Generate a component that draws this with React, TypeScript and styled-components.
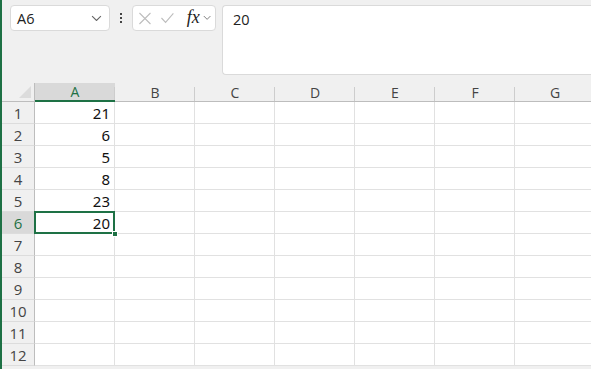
import React from "react";
import styled, { createGlobalStyle } from "styled-components";

const GlobalStyle = createGlobalStyle`
  html, body {
    margin: 0;
    padding: 0;
    background: #f0f0f0;
    overflow: hidden;
  }
  * {
    box-sizing: border-box;
  }
`;

const green = "#1e7145";
const columns = ["A", "B", "C", "D", "E", "F", "G"];
const values: Record<number, string> = { 1: "21", 2: "6", 3: "5", 4: "8", 5: "23", 6: "20" };
const selectedRow = 6;

export default function App() {
  const rows = Array.from({ length: 12 }, (_, i) => i + 1);

  return (
    <Window>
      <GlobalStyle />
      <FormulaRow>
        <NameBox>
          <span>A6</span>
          <Chevron size={11} />
        </NameBox>
        <Dots>
          <i />
          <i />
          <i />
        </Dots>
        <FxBox>
          <svg width="13" height="13" viewBox="0 0 13 13">
            <path d="M0.5 0.5 L12.5 12.5 M12.5 0.5 L0.5 12.5" stroke="#bdbdbd" strokeWidth="1.2" fill="none" />
          </svg>
          <svg width="14" height="12" viewBox="0 0 14 12">
            <path d="M0.5 6 L5 10.8 L13.5 1" stroke="#bdbdbd" strokeWidth="1.2" fill="none" />
          </svg>
          <FxLabel>fx</FxLabel>
          <Chevron size={9} />
        </FxBox>
        <FormulaInput>20</FormulaInput>
      </FormulaRow>

      <Sheet>
        <Corner>
          <svg width="12" height="12" viewBox="0 0 12 12">
            <path d="M12 0 L12 12 L0 12 Z" fill="#dcdcdc" />
          </svg>
        </Corner>
        {columns.map((c) => (
          <ColHeader key={c} $active={c === "A"}>
            {c}
          </ColHeader>
        ))}
        {rows.map((r) => (
          <React.Fragment key={r}>
            <RowHeader $active={r === selectedRow}>{r}</RowHeader>
            {columns.map((c) => (
              <Cell key={c}>
                {c === "A" ? values[r] : ""}
                {c === "A" && r === selectedRow && (
                  <Selection>
                    <Handle />
                  </Selection>
                )}
              </Cell>
            ))}
          </React.Fragment>
        ))}
      </Sheet>
    </Window>
  );
}

function Chevron({ size }: { size: number }) {
  return (
    <svg width={size} height={size * 0.6} viewBox="0 0 10 6">
      <path d="M1 1 L5 5 L9 1" stroke="#666" strokeWidth="1" fill="none" />
    </svg>
  );
}

const Window = styled.div`
  height: 369px;
  border-left: 2px solid ${green};
  background: #f0f0f0;
  overflow: hidden;
  font-family: "Open Sans", "Noto Sans", sans-serif;
`;

const FormulaRow = styled.div`
  display: flex;
  align-items: flex-start;
  height: 83px;
  padding: 5px 0 0 8px;
`;

const Box = styled.div`
  display: flex;
  align-items: center;
  height: 26px;
  background: #fff;
  border: 1px solid #dadada;
  border-radius: 4px;
`;

const NameBox = styled(Box)`
  width: 100px;
  justify-content: space-between;
  padding: 0 7px 0 6px;
  font-size: 14.5px;
  color: #222;
`;

const Dots = styled.div`
  width: 22px;
  height: 26px;
  display: flex;
  flex-direction: column;
  align-items: center;
  justify-content: center;
  gap: 2px;

  i {
    display: block;
    width: 2px;
    height: 2px;
    background: #444;
  }
`;

const FxBox = styled(Box)`
  width: 84px;
  gap: 10px;
  padding: 0 4px 0 6px;

  svg:nth-child(2) {
    margin-right: 3px;
  }
`;

const FxLabel = styled.span`
  font-family: "Liberation Serif", "DejaVu Serif", serif;
  font-style: italic;
  font-size: 18px;
  line-height: 1;
  color: #222;
  margin-right: -7px;
  margin-top: -2px;
`;

const FormulaInput = styled.div`
  flex: 1;
  margin-left: 6px;
  height: 70px;
  background: #fff;
  border: 1px solid #dadada;
  border-right: none;
  border-radius: 4px 0 0 4px;
  padding: 4px 0 0 10px;
  font-size: 14.5px;
  color: #222;
`;

const Sheet = styled.div`
  display: grid;
  grid-template-columns: 33px repeat(7, 80px);
  grid-template-rows: 19px;
  grid-auto-rows: 22px;
`;

const Corner = styled.div`
  display: flex;
  align-items: flex-end;
  justify-content: flex-end;
  padding: 0 3px 3px 0;
  border-bottom: 1px solid #bdbdbd;
  border-right: 1px solid #bdbdbd;
`;

const ColHeader = styled.div<{ $active?: boolean }>`
  position: relative;
  display: flex;
  align-items: center;
  justify-content: center;
  font-size: 14px;
  color: ${(p) => (p.$active ? green : "#444")};
  background: ${(p) => (p.$active ? "#d9d9d9" : "transparent")};
  border-bottom: ${(p) => (p.$active ? `2px solid ${green}` : "1px solid #bdbdbd")};

  &::after {
    content: "";
    position: absolute;
    right: 0;
    top: 4px;
    bottom: 0;
    width: 1px;
    background: #cdcdcd;
  }
`;

const RowHeader = styled.div<{ $active?: boolean }>`
  display: flex;
  align-items: center;
  justify-content: center;
  font-size: 15px;
  color: ${(p) => (p.$active ? green : "#444")};
  background: ${(p) => (p.$active ? "#d9d9d9" : "#f0f0f0")};
  border-right: 1px solid #bdbdbd;
  border-bottom: 1px solid #dcdcdc;
`;

const Cell = styled.div`
  position: relative;
  display: flex;
  align-items: center;
  justify-content: flex-end;
  padding-right: 4px;
  background: #fff;
  border-right: 1px solid #e1e1e1;
  border-bottom: 1px solid #e1e1e1;
  font-family: "Noto Sans", "Open Sans", sans-serif;
  font-size: 15px;
  color: #111;
`;

const Selection = styled.div`
  position: absolute;
  z-index: 2;
  left: -1px;
  top: -1px;
  right: -1px;
  bottom: -1px;
  border: 2px solid ${green};
`;

const Handle = styled.div`
  position: absolute;
  right: -5px;
  bottom: -5px;
  width: 6px;
  height: 6px;
  background: ${green};
  border: 1px solid #fff;
`;
